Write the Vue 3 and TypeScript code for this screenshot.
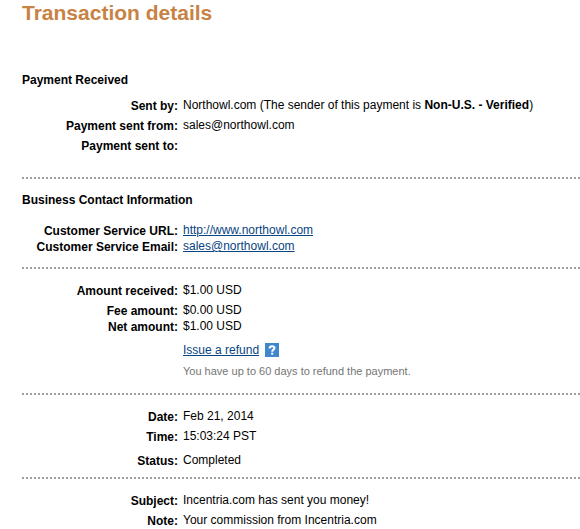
<script setup lang="ts">
interface Row {
  label: string
  value: string
  tight?: boolean
}

const amounts: Row[] = [
  { label: 'Amount received:', value: '$1.00 USD' },
  { label: 'Fee amount:', value: '$0.00 USD', tight: true },
  { label: 'Net amount:', value: '$1.00 USD' },
]
const timing: Row[] = [
  { label: 'Date:', value: 'Feb 21, 2014' },
  { label: 'Time:', value: '15:03:24 PST' },
]
const message: Row[] = [
  { label: 'Subject:', value: 'Incentria.com has sent you money!' },
  { label: 'Note:', value: 'Your commission from Incentria.com' },
]
</script>

<template>
  <main class="page">
    <h1>Transaction details</h1>

    <section class="payment">
      <h2>Payment Received</h2>
      <dl>
        <div class="row">
          <dt>Sent by:</dt>
          <dd>Northowl.com (The sender of this payment is <b>Non-U.S. - Verified</b>)</dd>
        </div>
        <div class="row">
          <dt>Payment sent from:</dt>
          <dd>sales@northowl.com</dd>
        </div>
        <div class="row">
          <dt>Payment sent to:</dt>
          <dd></dd>
        </div>
      </dl>
    </section>

    <section class="contact">
      <h2>Business Contact Information</h2>
      <dl>
        <div class="row tight">
          <dt>Customer Service URL:</dt>
          <dd><a href="http://www.northowl.com">http://www.northowl.com</a></dd>
        </div>
        <div class="row tight">
          <dt>Customer Service Email:</dt>
          <dd><a href="mailto:sales@northowl.com">sales@northowl.com</a></dd>
        </div>
      </dl>
    </section>

    <section class="amounts">
      <dl>
        <div v-for="row in amounts" :key="row.label" class="row" :class="{ tight: row.tight }">
          <dt>{{ row.label }}</dt>
          <dd>{{ row.value }}</dd>
        </div>
      </dl>
      <div class="refund">
        <p class="action">
          <a href="#refund">Issue a refund</a>
          <button type="button" class="help" aria-label="Help">
            <svg viewBox="0 0 14 14" width="14" height="14" aria-hidden="true">
              <path d="M4.7 5.4V5C4.7 2.6 9.5 2.6 9.5 5C9.5 6.8 7.2 6.5 7.2 8.8" fill="none" stroke="#fff" stroke-width="2" />
              <path d="M6.2 9.7h2v2h-2z" fill="#fff" />
            </svg>
          </button>
        </p>
        <p class="hint">You have up to 60 days to refund the payment.</p>
      </div>
    </section>

    <section class="timing">
      <dl>
        <div v-for="row in timing" :key="row.label" class="row">
          <dt>{{ row.label }}</dt>
          <dd>{{ row.value }}</dd>
        </div>
        <div class="row status">
          <dt>Status:</dt>
          <dd>Completed</dd>
        </div>
      </dl>
    </section>

    <section class="message">
      <dl>
        <div v-for="row in message" :key="row.label" class="row">
          <dt>{{ row.label }}</dt>
          <dd>{{ row.value }}</dd>
        </div>
      </dl>
    </section>
  </main>
</template>

<style>
body {
  margin: 0;
  background: #fff;
}
</style>

<style scoped>
.page {
  padding-left: 22px;
  color: #000;
  font: 12px/16px "Liberation Sans", Arial, sans-serif;
}
h1, h2, dl, dd, p {
  margin: 0;
}
h1 {
  color: #c88344;
  font-size: 21px;
  line-height: 26px;
}
h2 {
  font-size: 12px;
  line-height: 16px;
}
section + section {
  border-top: 2px dotted #a0a0a0;
}
.row {
  display: grid;
  grid-template-columns: 156px 1fr;
  column-gap: 5px;
  padding-bottom: 4px;
}
.row.tight {
  padding-bottom: 0;
}
dt {
  padding-top: 2px;
  font-weight: bold;
  line-height: 14px;
  text-align: right;
}
a {
  color: #084482;
  text-decoration: underline;
}
.payment {
  padding: 46px 0 20px;
}
.payment dl {
  padding-top: 9px;
}
.contact {
  padding: 13px 0;
}
.contact dl {
  padding-top: 14px;
}
.amounts {
  padding: 13px 0 14px;
}
.refund {
  padding: 4px 0 0 161px;
}
.action {
  display: flex;
  align-items: center;
  gap: 6px;
}
.help {
  display: block;
  width: 14px;
  height: 14px;
  padding: 0;
  border: 0;
  background: #3f86cd;
}
.help svg {
  display: block;
}
.hint {
  padding-top: 5px;
  color: #757575;
  font-size: 11px;
}
.timing {
  padding: 13px 0 5px;
}
.timing .status {
  padding-top: 4px;
}
.message {
  padding-top: 13px;
}
.message .row:last-child {
  padding-bottom: 0;
}
</style>
